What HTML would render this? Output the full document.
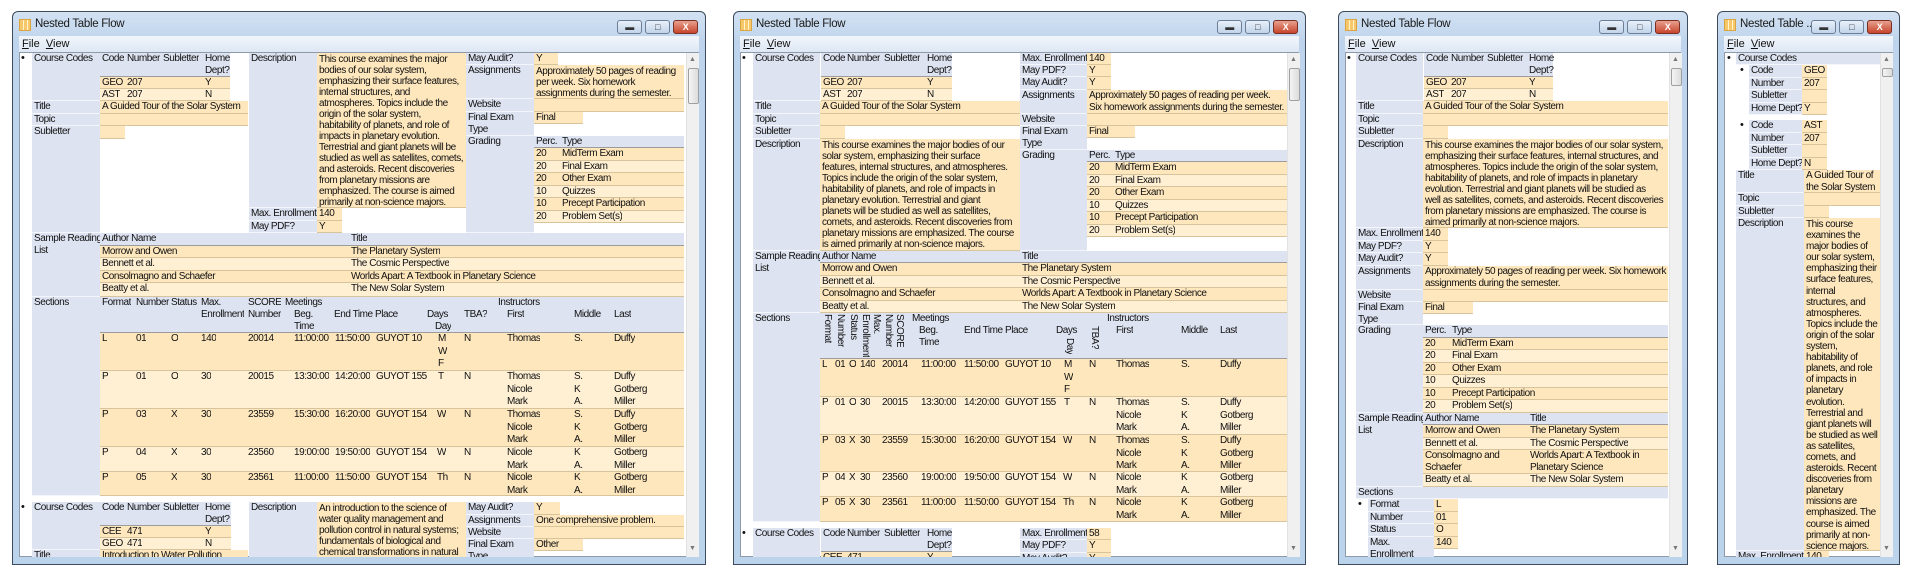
<!DOCTYPE html>
<html><head><meta charset="utf-8">
<style>
*{margin:0;padding:0;box-sizing:border-box}
body{width:1927px;height:572px;background:#fff;position:relative;overflow:hidden;font-family:"Liberation Sans",sans-serif;font-size:10px;letter-spacing:-0.45px;color:#111}
.a{position:absolute;white-space:nowrap;overflow:hidden;line-height:12px;padding-left:2px}
.L{background:#dde3f1;box-shadow:inset 0 -1px #f4f6fb}
.V{background:#fee7bd;box-shadow:inset 0 -1px #d8c49c}
.W{background:#fff0d4;box-shadow:inset 0 -1px #d8c49c}
.H{background:#dde3f1;box-shadow:inset 0 -1px #9c9c9c}
.win{position:absolute;top:11px;height:554px;border:1px solid #3d4b5c;border-radius:6px 6px 0 0;background:linear-gradient(#d3e2f3,#bed4ec 30px,#bcd3ec)}
.ttl{position:absolute;top:6px;left:22px;font-size:11.5px;letter-spacing:-0.3px;color:#1a1a1a}
.ico{position:absolute;top:7px;left:6px;width:12px;height:12px;background:repeating-linear-gradient(90deg,#f6c86a 0 3px,#fff2cc 3px 4px),#f6c86a;border:1px solid #d9a441}
.menu{position:absolute;top:24px;left:6px;right:6px;height:16px;background:linear-gradient(#f2f6fb,#dde7f4);font-size:11px;letter-spacing:0;padding:2px 3px}
.menu u{text-decoration:underline}
.cnt{position:absolute;top:40px;left:6px;right:6px;bottom:7px;background:#fff;border:1px solid #8e9aa8}
.btn{position:absolute;top:8px;width:25px;height:14px;border:1px solid #6d7f96;border-radius:3px;background:linear-gradient(#e8f0fa,#c2d4ea);font-size:9px;text-align:center;line-height:12px;color:#333}
.cls{background:linear-gradient(#e7a08f,#c8452c);color:#fff;font-weight:bold;border-color:#7a2e22}
.clip{position:absolute;left:0;top:0;width:1927px;height:572px}
.sb{position:absolute;top:53px;width:13px;height:504px;background:#f0f0f0;border-left:1px solid #e2e2e2}
.sb .th{position:absolute;left:1px;width:11px;border:1px solid #a0a0a0;border-radius:2px;background:linear-gradient(90deg,#f4f4f4,#dcdcdc)}
.sb .up,.sb .dn{position:absolute;left:2px;font-size:7px;color:#777}
.bl{position:absolute;font-size:11px}
.vt{writing-mode:vertical-rl;white-space:nowrap;line-height:11px}
</style></head><body>

<div class="win" style="left:12px;width:694px"><div class="ico"></div><div class="ttl">Nested Table Flow</div>
<div class="btn" style="left:604px">&#9644;</div><div class="btn" style="left:632px">&#9633;</div><div class="btn cls" style="left:660px">X</div>
<div class="menu"><u>F</u>ile&nbsp; <u>V</u>iew</div><div class="cnt"></div></div>

<div class="win" style="left:733px;width:573px"><div class="ico"></div><div class="ttl">Nested Table Flow</div>
<div class="btn" style="left:483px">&#9644;</div><div class="btn" style="left:511px">&#9633;</div><div class="btn cls" style="left:539px">X</div>
<div class="menu"><u>F</u>ile&nbsp; <u>V</u>iew</div><div class="cnt"></div></div>

<div class="win" style="left:1338px;width:350px"><div class="ico"></div><div class="ttl">Nested Table Flow</div>
<div class="btn" style="left:260px">&#9644;</div><div class="btn" style="left:288px">&#9633;</div><div class="btn cls" style="left:316px">X</div>
<div class="menu"><u>F</u>ile&nbsp; <u>V</u>iew</div><div class="cnt"></div></div>

<div class="win" style="left:1717px;width:183px"><div class="ico"></div><div class="ttl">Nested Table ...</div>
<div class="btn" style="left:93px">&#9644;</div><div class="btn" style="left:121px">&#9633;</div><div class="btn cls" style="left:149px">X</div>
<div class="menu"><u>F</u>ile&nbsp; <u>V</u>iew</div><div class="cnt"></div></div>

<div class="clip" style="clip-path:inset(52px 1241px 15px 19px)">
<div class="bl" style="left:21px;top:52px">•</div>
<div class="a L" style="left:32px;top:53px;width:68px;height:48px">Course Codes</div>
<div class="a L" style="left:32px;top:101px;width:68px;height:13px">Title</div>
<div class="a L" style="left:32px;top:114px;width:68px;height:12px">Topic</div>
<div class="a L" style="left:32px;top:126px;width:68px;height:107px">Subletter</div>
<div class="a H" style="left:100px;top:53px;width:130px;height:24px"></div>
<div class="a" style="left:100px;top:53px">Code</div><div class="a" style="left:125px;top:53px">Number</div><div class="a" style="left:161px;top:53px">Subletter</div><div class="a" style="left:203px;top:53px">Home<br>Dept?</div>
<div class="a V" style="left:100px;top:77px;width:130px;height:12px"></div>
<div class="a" style="left:100px;top:77px">GEO</div><div class="a" style="left:125px;top:77px">207</div><div class="a" style="left:203px;top:77px">Y</div>
<div class="a W" style="left:100px;top:89px;width:130px;height:12px"></div>
<div class="a" style="left:100px;top:89px">AST</div><div class="a" style="left:125px;top:89px">207</div><div class="a" style="left:203px;top:89px">N</div>
<div class="a V" style="left:100px;top:101px;width:148px;height:13px">A Guided Tour of the Solar System</div>
<div class="a V" style="left:100px;top:114px;width:148px;height:12px"></div>
<div class="a V" style="left:100px;top:126px;width:25px;height:13px"></div>
<div class="a L" style="left:249px;top:53px;width:68px;height:155px">Description</div>
<div class="a V" style="left:317px;top:53px;width:149px;height:155px;line-height:11px;padding-top:1px">This course examines the major<br>bodies of our solar system,<br>emphasizing their surface features,<br>internal structures, and<br>atmospheres. Topics include the<br>origin of the solar system,<br>habitability of planets, and role of<br>impacts in planetary evolution.<br>Terrestrial and giant planets will be<br>studied as well as satellites, comets,<br>and asteroids. Recent discoveries<br>from planetary missions are<br>emphasized. The course is aimed<br>primarily at non-science majors.</div>
<div class="a L" style="left:249px;top:208px;width:68px;height:13px">Max. Enrollment</div><div class="a V" style="left:317px;top:208px;width:25px;height:13px">140</div>
<div class="a L" style="left:249px;top:221px;width:68px;height:12px">May PDF?</div><div class="a V" style="left:317px;top:221px;width:25px;height:12px">Y</div>
<div class="a L" style="left:466px;top:53px;width:68px;height:12px">May Audit?</div><div class="a V" style="left:534px;top:53px;width:24px;height:12px">Y</div>
<div class="a L" style="left:466px;top:65px;width:68px;height:34px">Assignments</div><div class="a V" style="left:534px;top:65px;width:150px;height:34px;line-height:11px;padding-top:1px">Approximately 50 pages of reading<br>per week. Six homework<br>assignments during the semester.</div>
<div class="a L" style="left:466px;top:99px;width:68px;height:13px">Website</div><div class="a V" style="left:534px;top:99px;width:150px;height:13px"></div>
<div class="a L" style="left:466px;top:112px;width:68px;height:24px">Final Exam<br>Type</div><div class="a V" style="left:534px;top:112px;width:49px;height:12px">Final</div>
<div class="a L" style="left:466px;top:136px;width:68px;height:97px">Grading</div>
<div class="a H" style="left:534px;top:136px;width:150px;height:12px">Perc.</div><div class="a" style="left:560px;top:136px">Type</div>
<div class="a V" style="left:534px;top:148px;width:150px;height:13px">20</div><div class="a" style="left:560px;top:148px">MidTerm Exam</div>
<div class="a W" style="left:534px;top:161px;width:150px;height:12px">20</div><div class="a" style="left:560px;top:161px">Final Exam</div>
<div class="a V" style="left:534px;top:173px;width:150px;height:13px">20</div><div class="a" style="left:560px;top:173px">Other Exam</div>
<div class="a W" style="left:534px;top:186px;width:150px;height:12px">10</div><div class="a" style="left:560px;top:186px">Quizzes</div>
<div class="a V" style="left:534px;top:198px;width:150px;height:13px">10</div><div class="a" style="left:560px;top:198px">Precept Participation</div>
<div class="a W" style="left:534px;top:211px;width:150px;height:12px">20</div><div class="a" style="left:560px;top:211px">Problem Set(s)</div>
<div class="a L" style="left:32px;top:233px;width:68px;height:64px">Sample Reading<br>List</div>
<div class="a H" style="left:100px;top:233px;width:584px;height:13px">Author Name</div><div class="a" style="left:349px;top:233px">Title</div>
<div class="a V" style="left:100px;top:246px;width:584px;height:12px">Morrow and Owen</div><div class="a" style="left:349px;top:246px">The Planetary System</div>
<div class="a W" style="left:100px;top:258px;width:584px;height:13px">Bennett et al.</div><div class="a" style="left:349px;top:258px">The Cosmic Perspective</div>
<div class="a V" style="left:100px;top:271px;width:584px;height:12px">Consolmagno and Schaefer</div><div class="a" style="left:349px;top:271px">Worlds Apart: A Textbook in Planetary Science</div>
<div class="a W" style="left:100px;top:283px;width:584px;height:14px">Beatty et al.</div><div class="a" style="left:349px;top:283px">The New Solar System</div>
<div class="a L" style="left:32px;top:297px;width:68px;height:199px">Sections</div>
<div class="a H" style="left:100px;top:297px;width:584px;height:36px"></div>
<div class="a" style="left:100px;top:297px">Format</div><div class="a" style="left:134px;top:297px">Number</div><div class="a" style="left:169px;top:297px">Status</div><div class="a" style="left:199px;top:297px">Max.<br>Enrollment</div><div class="a" style="left:246px;top:297px">SCORE<br>Number</div><div class="a" style="left:283px;top:297px">Meetings</div>
<div class="a" style="left:292px;top:309px">Beg.<br>Time</div><div class="a" style="left:332px;top:309px">End Time</div><div class="a" style="left:373px;top:309px">Place</div><div class="a" style="left:425px;top:309px">Days</div><div class="a" style="left:433px;top:321px">Day</div><div class="a" style="left:462px;top:309px">TBA?</div>
<div class="a" style="left:496px;top:297px">Instructors</div><div class="a" style="left:505px;top:309px">First</div><div class="a" style="left:572px;top:309px">Middle</div><div class="a" style="left:612px;top:309px">Last</div>
<div class="a V" style="left:100px;top:333px;width:584px;height:38px"></div>
<div class="a W" style="left:100px;top:371px;width:584px;height:38px"></div>
<div class="a V" style="left:100px;top:409px;width:584px;height:38px"></div>
<div class="a W" style="left:100px;top:447px;width:584px;height:25px"></div>
<div class="a V" style="left:100px;top:472px;width:584px;height:24px"></div>
<div class="a" style="left:100px;top:333px">L</div><div class="a" style="left:134px;top:333px">01</div><div class="a" style="left:169px;top:333px">O</div><div class="a" style="left:199px;top:333px">140</div><div class="a" style="left:246px;top:333px">20014</div><div class="a" style="left:292px;top:333px">11:00:00</div><div class="a" style="left:333px;top:333px">11:50:00</div><div class="a" style="left:374px;top:333px">GUYOT 10</div><div class="a" style="left:436px;top:333px;line-height:12.5px">M<br>W<br>F</div><div class="a" style="left:462px;top:333px">N</div><div class="a" style="left:505px;top:333px">Thomas</div><div class="a" style="left:572px;top:333px">S.</div><div class="a" style="left:612px;top:333px">Duffy</div>
<div class="a" style="left:100px;top:371px">P</div><div class="a" style="left:134px;top:371px">01</div><div class="a" style="left:169px;top:371px">O</div><div class="a" style="left:199px;top:371px">30</div><div class="a" style="left:246px;top:371px">20015</div><div class="a" style="left:292px;top:371px">13:30:00</div><div class="a" style="left:333px;top:371px">14:20:00</div><div class="a" style="left:374px;top:371px">GUYOT 155</div><div class="a" style="left:436px;top:371px">T</div><div class="a" style="left:462px;top:371px">N</div><div class="a" style="left:505px;top:371px;line-height:12.5px">Thomas<br>Nicole<br>Mark</div><div class="a" style="left:572px;top:371px;line-height:12.5px">S.<br>K<br>A.</div><div class="a" style="left:612px;top:371px;line-height:12.5px">Duffy<br>Gotberg<br>Miller</div>
<div class="a" style="left:100px;top:409px">P</div><div class="a" style="left:134px;top:409px">03</div><div class="a" style="left:169px;top:409px">X</div><div class="a" style="left:199px;top:409px">30</div><div class="a" style="left:246px;top:409px">23559</div><div class="a" style="left:292px;top:409px">15:30:00</div><div class="a" style="left:333px;top:409px">16:20:00</div><div class="a" style="left:374px;top:409px">GUYOT 154</div><div class="a" style="left:435px;top:409px">W</div><div class="a" style="left:462px;top:409px">N</div><div class="a" style="left:505px;top:409px;line-height:12.5px">Thomas<br>Nicole<br>Mark</div><div class="a" style="left:572px;top:409px;line-height:12.5px">S.<br>K<br>A.</div><div class="a" style="left:612px;top:409px;line-height:12.5px">Duffy<br>Gotberg<br>Miller</div>
<div class="a" style="left:100px;top:447px">P</div><div class="a" style="left:134px;top:447px">04</div><div class="a" style="left:169px;top:447px">X</div><div class="a" style="left:199px;top:447px">30</div><div class="a" style="left:246px;top:447px">23560</div><div class="a" style="left:292px;top:447px">19:00:00</div><div class="a" style="left:333px;top:447px">19:50:00</div><div class="a" style="left:374px;top:447px">GUYOT 154</div><div class="a" style="left:435px;top:447px">W</div><div class="a" style="left:462px;top:447px">N</div><div class="a" style="left:505px;top:447px;line-height:12.5px">Nicole<br>Mark</div><div class="a" style="left:572px;top:447px;line-height:12.5px">K<br>A.</div><div class="a" style="left:612px;top:447px;line-height:12.5px">Gotberg<br>Miller</div>
<div class="a" style="left:100px;top:472px">P</div><div class="a" style="left:134px;top:472px">05</div><div class="a" style="left:169px;top:472px">X</div><div class="a" style="left:199px;top:472px">30</div><div class="a" style="left:246px;top:472px">23561</div><div class="a" style="left:292px;top:472px">11:00:00</div><div class="a" style="left:333px;top:472px">11:50:00</div><div class="a" style="left:374px;top:472px">GUYOT 154</div><div class="a" style="left:435px;top:472px">Th</div><div class="a" style="left:462px;top:472px">N</div><div class="a" style="left:505px;top:472px;line-height:12.5px">Nicole<br>Mark</div><div class="a" style="left:572px;top:472px;line-height:12.5px">K<br>A.</div><div class="a" style="left:612px;top:472px;line-height:12.5px">Gotberg<br>Miller</div>
<div class="bl" style="left:21px;top:501px">•</div>
<div class="a L" style="left:32px;top:502px;width:68px;height:48px">Course Codes</div>
<div class="a H" style="left:100px;top:502px;width:131px;height:24px"></div>
<div class="a" style="left:100px;top:502px">Code</div><div class="a" style="left:125px;top:502px">Number</div><div class="a" style="left:161px;top:502px">Subletter</div><div class="a" style="left:203px;top:502px">Home<br>Dept?</div>
<div class="a V" style="left:100px;top:526px;width:131px;height:12px"></div><div class="a" style="left:100px;top:526px">CEE</div><div class="a" style="left:125px;top:526px">471</div><div class="a" style="left:203px;top:526px">Y</div>
<div class="a W" style="left:100px;top:538px;width:131px;height:12px"></div><div class="a" style="left:100px;top:538px">GEO</div><div class="a" style="left:125px;top:538px">471</div><div class="a" style="left:203px;top:538px">N</div>
<div class="a L" style="left:32px;top:550px;width:68px;height:12px">Title</div><div class="a V" style="left:100px;top:550px;width:148px;height:12px">Introduction to Water Pollution</div>
<div class="a L" style="left:249px;top:502px;width:68px;height:60px">Description</div>
<div class="a V" style="left:317px;top:502px;width:149px;height:60px;line-height:11px;padding-top:1px">An introduction to the science of<br>water quality management and<br>pollution control in natural systems;<br>fundamentals of biological and<br>chemical transformations in natural</div>
<div class="a L" style="left:466px;top:502px;width:68px;height:13px">May Audit?</div><div class="a V" style="left:534px;top:502px;width:26px;height:13px">Y</div>
<div class="a L" style="left:466px;top:515px;width:68px;height:12px">Assignments</div><div class="a V" style="left:534px;top:515px;width:150px;height:12px">One comprehensive problem.</div>
<div class="a L" style="left:466px;top:527px;width:68px;height:12px">Website</div><div class="a V" style="left:534px;top:527px;width:150px;height:12px"></div>
<div class="a L" style="left:466px;top:539px;width:68px;height:24px">Final Exam<br>Type</div><div class="a V" style="left:534px;top:539px;width:49px;height:12px">Other</div>
</div>
<div class="sb" style="left:686px"><div class="up" style="top:3px">▲</div><div class="th" style="top:15px;height:36px"></div><div class="dn" style="top:492px">▼</div></div>

<div class="clip" style="clip-path:inset(52px 628px 15px 740px)">
<div class="bl" style="left:742px;top:52px">•</div>
<div class="a L" style="left:753px;top:53px;width:67px;height:48px">Course Codes</div>
<div class="a L" style="left:753px;top:101px;width:67px;height:13px">Title</div>
<div class="a L" style="left:753px;top:114px;width:67px;height:12px">Topic</div>
<div class="a L" style="left:753px;top:126px;width:67px;height:13px">Subletter</div>
<div class="a L" style="left:753px;top:139px;width:67px;height:112px">Description</div>
<div class="a H" style="left:821px;top:53px;width:131px;height:24px"></div>
<div class="a" style="left:821px;top:53px">Code</div><div class="a" style="left:845px;top:53px">Number</div><div class="a" style="left:882px;top:53px">Subletter</div><div class="a" style="left:925px;top:53px">Home<br>Dept?</div>
<div class="a V" style="left:821px;top:77px;width:131px;height:12px"></div><div class="a" style="left:821px;top:77px">GEO</div><div class="a" style="left:845px;top:77px">207</div><div class="a" style="left:925px;top:77px">Y</div>
<div class="a W" style="left:821px;top:89px;width:131px;height:12px"></div><div class="a" style="left:821px;top:89px">AST</div><div class="a" style="left:845px;top:89px">207</div><div class="a" style="left:925px;top:89px">N</div>
<div class="a V" style="left:820px;top:101px;width:200px;height:13px">A Guided Tour of the Solar System</div>
<div class="a V" style="left:820px;top:114px;width:200px;height:12px"></div>
<div class="a V" style="left:820px;top:126px;width:25px;height:13px"></div>
<div class="a V" style="left:820px;top:139px;width:200px;height:112px;line-height:11px;padding-top:1px">This course examines the major bodies of our<br>solar system, emphasizing their surface<br>features, internal structures, and atmospheres.<br>Topics include the origin of the solar system,<br>habitability of planets, and role of impacts in<br>planetary evolution. Terrestrial and giant<br>planets will be studied as well as satellites,<br>comets, and asteroids. Recent discoveries from<br>planetary missions are emphasized. The course<br>is aimed primarily at non-science majors.</div>
<div class="a L" style="left:1020px;top:53px;width:67px;height:12px">Max. Enrollment</div><div class="a V" style="left:1087px;top:53px;width:24px;height:12px">140</div>
<div class="a L" style="left:1020px;top:65px;width:67px;height:12px">May PDF?</div><div class="a V" style="left:1087px;top:65px;width:24px;height:12px">Y</div>
<div class="a L" style="left:1020px;top:77px;width:67px;height:13px">May Audit?</div><div class="a V" style="left:1087px;top:77px;width:24px;height:13px">Y</div>
<div class="a L" style="left:1020px;top:90px;width:67px;height:24px">Assignments</div><div class="a V" style="left:1087px;top:90px;width:200px;height:24px">Approximately 50 pages of reading per week.<br>Six homework assignments during the semester.</div>
<div class="a L" style="left:1020px;top:114px;width:67px;height:12px">Website</div><div class="a V" style="left:1087px;top:114px;width:200px;height:12px"></div>
<div class="a L" style="left:1020px;top:126px;width:67px;height:24px">Final Exam<br>Type</div><div class="a V" style="left:1087px;top:126px;width:48px;height:12px">Final</div>
<div class="a L" style="left:1020px;top:150px;width:67px;height:101px">Grading</div>
<div class="a H" style="left:1087px;top:150px;width:200px;height:12px">Perc.</div><div class="a" style="left:1113px;top:150px">Type</div>
<div class="a V" style="left:1087px;top:162px;width:200px;height:13px">20</div><div class="a" style="left:1113px;top:162px">MidTerm Exam</div>
<div class="a W" style="left:1087px;top:175px;width:200px;height:12px">20</div><div class="a" style="left:1113px;top:175px">Final Exam</div>
<div class="a V" style="left:1087px;top:187px;width:200px;height:13px">20</div><div class="a" style="left:1113px;top:187px">Other Exam</div>
<div class="a W" style="left:1087px;top:200px;width:200px;height:12px">10</div><div class="a" style="left:1113px;top:200px">Quizzes</div>
<div class="a V" style="left:1087px;top:212px;width:200px;height:13px">10</div><div class="a" style="left:1113px;top:212px">Precept Participation</div>
<div class="a W" style="left:1087px;top:225px;width:200px;height:12px">20</div><div class="a" style="left:1113px;top:225px">Problem Set(s)</div>
<div class="a L" style="left:753px;top:251px;width:67px;height:62px">Sample Reading<br>List</div>
<div class="a H" style="left:820px;top:251px;width:467px;height:12px">Author Name</div><div class="a" style="left:1020px;top:251px">Title</div>
<div class="a V" style="left:820px;top:263px;width:467px;height:13px">Morrow and Owen</div><div class="a" style="left:1020px;top:263px">The Planetary System</div>
<div class="a W" style="left:820px;top:276px;width:467px;height:12px">Bennett et al.</div><div class="a" style="left:1020px;top:276px">The Cosmic Perspective</div>
<div class="a V" style="left:820px;top:288px;width:467px;height:13px">Consolmagno and Schaefer</div><div class="a" style="left:1020px;top:288px">Worlds Apart: A Textbook in Planetary Science</div>
<div class="a W" style="left:820px;top:301px;width:467px;height:12px">Beatty et al.</div><div class="a" style="left:1020px;top:301px">The New Solar System</div>
<div class="a L" style="left:753px;top:313px;width:67px;height:209px">Sections</div>
<div class="a H" style="left:820px;top:313px;width:467px;height:46px"></div>
<div class="a vt" style="left:820px;top:314px">Format</div><div class="a vt" style="left:833px;top:314px">Number</div><div class="a vt" style="left:846px;top:314px">Status</div><div class="a vt" style="left:858px;top:314px">Max.<br>Enrollment</div><div class="a vt" style="left:881px;top:314px">SCORE<br>Number</div>
<div class="a" style="left:910px;top:313px">Meetings</div><div class="a" style="left:917px;top:325px">Beg.<br>Time</div><div class="a" style="left:962px;top:325px">End Time</div><div class="a" style="left:1003px;top:325px">Place</div><div class="a" style="left:1054px;top:325px">Days</div><div class="a vt" style="left:1062px;top:338px">Day</div><div class="a vt" style="left:1087px;top:326px">TBA?</div>
<div class="a" style="left:1105px;top:313px">Instructors</div><div class="a" style="left:1114px;top:325px">First</div><div class="a" style="left:1179px;top:325px">Middle</div><div class="a" style="left:1218px;top:325px">Last</div>
<div class="a V" style="left:820px;top:359px;width:467px;height:38px"></div>
<div class="a W" style="left:820px;top:397px;width:467px;height:38px"></div>
<div class="a V" style="left:820px;top:435px;width:467px;height:37px"></div>
<div class="a W" style="left:820px;top:472px;width:467px;height:25px"></div>
<div class="a V" style="left:820px;top:497px;width:467px;height:25px"></div>
<div class="a" style="left:820px;top:359px">L</div><div class="a" style="left:833px;top:359px">01</div><div class="a" style="left:847px;top:359px">O</div><div class="a" style="left:858px;top:359px">140</div><div class="a" style="left:880px;top:359px">20014</div><div class="a" style="left:919px;top:359px">11:00:00</div><div class="a" style="left:962px;top:359px">11:50:00</div><div class="a" style="left:1003px;top:359px">GUYOT 10</div><div class="a" style="left:1062px;top:359px;line-height:12.5px">M<br>W<br>F</div><div class="a" style="left:1087px;top:359px">N</div><div class="a" style="left:1114px;top:359px">Thomas</div><div class="a" style="left:1179px;top:359px">S.</div><div class="a" style="left:1218px;top:359px">Duffy</div>
<div class="a" style="left:820px;top:397px">P</div><div class="a" style="left:833px;top:397px">01</div><div class="a" style="left:847px;top:397px">O</div><div class="a" style="left:858px;top:397px">30</div><div class="a" style="left:880px;top:397px">20015</div><div class="a" style="left:919px;top:397px">13:30:00</div><div class="a" style="left:962px;top:397px">14:20:00</div><div class="a" style="left:1003px;top:397px">GUYOT 155</div><div class="a" style="left:1062px;top:397px">T</div><div class="a" style="left:1087px;top:397px">N</div><div class="a" style="left:1114px;top:397px;line-height:12.5px">Thomas<br>Nicole<br>Mark</div><div class="a" style="left:1179px;top:397px;line-height:12.5px">S.<br>K<br>A.</div><div class="a" style="left:1218px;top:397px;line-height:12.5px">Duffy<br>Gotberg<br>Miller</div>
<div class="a" style="left:820px;top:435px">P</div><div class="a" style="left:833px;top:435px">03</div><div class="a" style="left:847px;top:435px">X</div><div class="a" style="left:858px;top:435px">30</div><div class="a" style="left:880px;top:435px">23559</div><div class="a" style="left:919px;top:435px">15:30:00</div><div class="a" style="left:962px;top:435px">16:20:00</div><div class="a" style="left:1003px;top:435px">GUYOT 154</div><div class="a" style="left:1061px;top:435px">W</div><div class="a" style="left:1087px;top:435px">N</div><div class="a" style="left:1114px;top:435px;line-height:12.5px">Thomas<br>Nicole<br>Mark</div><div class="a" style="left:1179px;top:435px;line-height:12.5px">S.<br>K<br>A.</div><div class="a" style="left:1218px;top:435px;line-height:12.5px">Duffy<br>Gotberg<br>Miller</div>
<div class="a" style="left:820px;top:472px">P</div><div class="a" style="left:833px;top:472px">04</div><div class="a" style="left:847px;top:472px">X</div><div class="a" style="left:858px;top:472px">30</div><div class="a" style="left:880px;top:472px">23560</div><div class="a" style="left:919px;top:472px">19:00:00</div><div class="a" style="left:962px;top:472px">19:50:00</div><div class="a" style="left:1003px;top:472px">GUYOT 154</div><div class="a" style="left:1061px;top:472px">W</div><div class="a" style="left:1087px;top:472px">N</div><div class="a" style="left:1114px;top:472px;line-height:12.5px">Nicole<br>Mark</div><div class="a" style="left:1179px;top:472px;line-height:12.5px">K<br>A.</div><div class="a" style="left:1218px;top:472px;line-height:12.5px">Gotberg<br>Miller</div>
<div class="a" style="left:820px;top:497px">P</div><div class="a" style="left:833px;top:497px">05</div><div class="a" style="left:847px;top:497px">X</div><div class="a" style="left:858px;top:497px">30</div><div class="a" style="left:880px;top:497px">23561</div><div class="a" style="left:919px;top:497px">11:00:00</div><div class="a" style="left:962px;top:497px">11:50:00</div><div class="a" style="left:1003px;top:497px">GUYOT 154</div><div class="a" style="left:1061px;top:497px">Th</div><div class="a" style="left:1087px;top:497px">N</div><div class="a" style="left:1114px;top:497px;line-height:12.5px">Nicole<br>Mark</div><div class="a" style="left:1179px;top:497px;line-height:12.5px">K<br>A.</div><div class="a" style="left:1218px;top:497px;line-height:12.5px">Gotberg<br>Miller</div>
<div class="bl" style="left:742px;top:527px">•</div>
<div class="a L" style="left:753px;top:528px;width:67px;height:34px">Course Codes</div>
<div class="a H" style="left:821px;top:528px;width:131px;height:24px"></div>
<div class="a" style="left:821px;top:528px">Code</div><div class="a" style="left:845px;top:528px">Number</div><div class="a" style="left:882px;top:528px">Subletter</div><div class="a" style="left:925px;top:528px">Home<br>Dept?</div>
<div class="a V" style="left:821px;top:552px;width:131px;height:12px"></div><div class="a" style="left:821px;top:552px">CEE</div><div class="a" style="left:845px;top:552px">471</div><div class="a" style="left:925px;top:552px">Y</div>
<div class="a L" style="left:1020px;top:528px;width:67px;height:12px">Max. Enrollment</div><div class="a V" style="left:1087px;top:528px;width:24px;height:12px">58</div>
<div class="a L" style="left:1020px;top:540px;width:67px;height:13px">May PDF?</div><div class="a V" style="left:1087px;top:540px;width:24px;height:13px">Y</div>
<div class="a L" style="left:1020px;top:553px;width:67px;height:12px">May Audit?</div><div class="a V" style="left:1087px;top:553px;width:24px;height:12px">Y</div>
</div>
<div class="sb" style="left:1287px"><div class="up" style="top:3px">▲</div><div class="th" style="top:15px;height:33px"></div><div class="dn" style="top:492px">▼</div></div>

<div class="clip" style="clip-path:inset(52px 246px 15px 1345px)">
<div class="bl" style="left:1347px;top:52px">•</div>
<div class="a L" style="left:1356px;top:53px;width:67px;height:48px">Course Codes</div>
<div class="a H" style="left:1424px;top:53px;width:129px;height:24px"></div>
<div class="a" style="left:1424px;top:53px">Code</div><div class="a" style="left:1449px;top:53px">Number</div><div class="a" style="left:1485px;top:53px">Subletter</div><div class="a" style="left:1527px;top:53px">Home<br>Dept?</div>
<div class="a V" style="left:1424px;top:77px;width:129px;height:12px"></div><div class="a" style="left:1424px;top:77px">GEO</div><div class="a" style="left:1449px;top:77px">207</div><div class="a" style="left:1527px;top:77px">Y</div>
<div class="a W" style="left:1424px;top:89px;width:129px;height:12px"></div><div class="a" style="left:1424px;top:89px">AST</div><div class="a" style="left:1449px;top:89px">207</div><div class="a" style="left:1527px;top:89px">N</div>
<div class="a L" style="left:1356px;top:101px;width:67px;height:13px">Title</div><div class="a V" style="left:1423px;top:101px;width:245px;height:13px">A Guided Tour of the Solar System</div>
<div class="a L" style="left:1356px;top:114px;width:67px;height:12px">Topic</div><div class="a V" style="left:1423px;top:114px;width:245px;height:12px"></div>
<div class="a L" style="left:1356px;top:126px;width:67px;height:13px">Subletter</div><div class="a V" style="left:1423px;top:126px;width:25px;height:13px"></div>
<div class="a L" style="left:1356px;top:139px;width:67px;height:89px">Description</div>
<div class="a V" style="left:1423px;top:139px;width:245px;height:89px;line-height:11px;padding-top:1px">This course examines the major bodies of our solar system,<br>emphasizing their surface features, internal structures, and<br>atmospheres. Topics include the origin of the solar system,<br>habitability of planets, and role of impacts in planetary<br>evolution. Terrestrial and giant planets will be studied as<br>well as satellites, comets, and asteroids. Recent discoveries<br>from planetary missions are emphasized. The course is<br>aimed primarily at non-science majors.</div>
<div class="a L" style="left:1356px;top:228px;width:67px;height:13px">Max. Enrollment</div><div class="a V" style="left:1423px;top:228px;width:25px;height:13px">140</div>
<div class="a L" style="left:1356px;top:241px;width:67px;height:12px">May PDF?</div><div class="a V" style="left:1423px;top:241px;width:25px;height:12px">Y</div>
<div class="a L" style="left:1356px;top:253px;width:67px;height:13px">May Audit?</div><div class="a V" style="left:1423px;top:253px;width:25px;height:13px">Y</div>
<div class="a L" style="left:1356px;top:266px;width:67px;height:24px">Assignments</div><div class="a V" style="left:1423px;top:266px;width:245px;height:24px">Approximately 50 pages of reading per week. Six homework<br>assignments during the semester.</div>
<div class="a L" style="left:1356px;top:290px;width:67px;height:12px">Website</div><div class="a V" style="left:1423px;top:290px;width:245px;height:12px"></div>
<div class="a L" style="left:1356px;top:302px;width:67px;height:23px">Final Exam<br>Type</div><div class="a V" style="left:1423px;top:302px;width:50px;height:12px">Final</div>
<div class="a L" style="left:1356px;top:325px;width:67px;height:88px">Grading</div>
<div class="a H" style="left:1423px;top:325px;width:245px;height:13px">Perc.</div><div class="a" style="left:1450px;top:325px">Type</div>
<div class="a V" style="left:1423px;top:338px;width:245px;height:12px">20</div><div class="a" style="left:1450px;top:338px">MidTerm Exam</div>
<div class="a W" style="left:1423px;top:350px;width:245px;height:13px">20</div><div class="a" style="left:1450px;top:350px">Final Exam</div>
<div class="a V" style="left:1423px;top:363px;width:245px;height:12px">20</div><div class="a" style="left:1450px;top:363px">Other Exam</div>
<div class="a W" style="left:1423px;top:375px;width:245px;height:13px">10</div><div class="a" style="left:1450px;top:375px">Quizzes</div>
<div class="a V" style="left:1423px;top:388px;width:245px;height:12px">10</div><div class="a" style="left:1450px;top:388px">Precept Participation</div>
<div class="a W" style="left:1423px;top:400px;width:245px;height:13px">20</div><div class="a" style="left:1450px;top:400px">Problem Set(s)</div>
<div class="a L" style="left:1356px;top:413px;width:67px;height:74px">Sample Reading<br>List</div>
<div class="a H" style="left:1423px;top:413px;width:245px;height:12px">Author Name</div><div class="a" style="left:1528px;top:413px">Title</div>
<div class="a V" style="left:1423px;top:425px;width:245px;height:13px">Morrow and Owen</div><div class="a" style="left:1528px;top:425px">The Planetary System</div>
<div class="a W" style="left:1423px;top:438px;width:245px;height:12px">Bennett et al.</div><div class="a" style="left:1528px;top:438px">The Cosmic Perspective</div>
<div class="a V" style="left:1423px;top:450px;width:245px;height:24px">Consolmagno and<br>Schaefer</div><div class="a" style="left:1528px;top:450px">Worlds Apart: A Textbook in<br>Planetary Science</div>
<div class="a W" style="left:1423px;top:474px;width:245px;height:13px">Beatty et al.</div><div class="a" style="left:1528px;top:474px">The New Solar System</div>
<div class="a L" style="left:1356px;top:487px;width:312px;height:12px">Sections</div>
<div class="bl" style="left:1358px;top:498px">•</div>
<div class="a L" style="left:1368px;top:499px;width:66px;height:13px">Format</div><div class="a V" style="left:1434px;top:499px;width:24px;height:13px">L</div>
<div class="a L" style="left:1368px;top:512px;width:66px;height:12px">Number</div><div class="a V" style="left:1434px;top:512px;width:24px;height:12px">01</div>
<div class="a L" style="left:1368px;top:524px;width:66px;height:13px">Status</div><div class="a V" style="left:1434px;top:524px;width:24px;height:13px">O</div>
<div class="a L" style="left:1368px;top:537px;width:66px;height:24px">Max.<br>Enrollment</div><div class="a V" style="left:1434px;top:537px;width:24px;height:12px">140</div>
</div>
<div class="sb" style="left:1669px"><div class="up" style="top:3px">▲</div><div class="th" style="top:15px;height:18px"></div><div class="dn" style="top:492px">▼</div></div>

<div class="clip" style="clip-path:inset(52px 34px 15px 1724px)">
<div class="bl" style="left:1727px;top:52px">•</div>
<div class="a L" style="left:1736px;top:53px;width:144px;height:12px">Course Codes</div>
<div class="bl" style="left:1740px;top:64px">•</div>
<div class="a L" style="left:1749px;top:65px;width:53px;height:13px">Code</div><div class="a V" style="left:1802px;top:65px;width:25px;height:13px">GEO</div>
<div class="a L" style="left:1749px;top:78px;width:53px;height:12px">Number</div><div class="a V" style="left:1802px;top:78px;width:25px;height:12px">207</div>
<div class="a L" style="left:1749px;top:90px;width:53px;height:13px">Subletter</div><div class="a V" style="left:1802px;top:90px;width:25px;height:13px"></div>
<div class="a L" style="left:1749px;top:103px;width:53px;height:12px">Home Dept?</div><div class="a V" style="left:1802px;top:103px;width:25px;height:12px">Y</div>
<div class="bl" style="left:1740px;top:119px">•</div>
<div class="a L" style="left:1749px;top:120px;width:53px;height:13px">Code</div><div class="a V" style="left:1802px;top:120px;width:25px;height:13px">AST</div>
<div class="a L" style="left:1749px;top:133px;width:53px;height:12px">Number</div><div class="a V" style="left:1802px;top:133px;width:25px;height:12px">207</div>
<div class="a L" style="left:1749px;top:145px;width:53px;height:13px">Subletter</div><div class="a V" style="left:1802px;top:145px;width:25px;height:13px"></div>
<div class="a L" style="left:1749px;top:158px;width:53px;height:12px">Home Dept?</div><div class="a V" style="left:1802px;top:158px;width:25px;height:12px">N</div>
<div class="a L" style="left:1736px;top:170px;width:68px;height:23px">Title</div><div class="a V" style="left:1804px;top:170px;width:76px;height:23px">A Guided Tour of<br>the Solar System</div>
<div class="a L" style="left:1736px;top:193px;width:68px;height:13px">Topic</div><div class="a V" style="left:1804px;top:193px;width:76px;height:13px"></div>
<div class="a L" style="left:1736px;top:206px;width:68px;height:12px">Subletter</div><div class="a V" style="left:1804px;top:206px;width:25px;height:12px"></div>
<div class="a L" style="left:1736px;top:218px;width:68px;height:333px">Description</div>
<div class="a V" style="left:1804px;top:218px;width:76px;height:333px;line-height:11.1px;padding-top:1px">This course<br>examines the<br>major bodies of<br>our solar system,<br>emphasizing their<br>surface features,<br>internal<br>structures, and<br>atmospheres.<br>Topics include the<br>origin of the solar<br>system,<br>habitability of<br>planets, and role<br>of impacts in<br>planetary<br>evolution.<br>Terrestrial and<br>giant planets will<br>be studied as well<br>as satellites,<br>comets, and<br>asteroids. Recent<br>discoveries from<br>planetary<br>missions are<br>emphasized. The<br>course is aimed<br>primarily at non-<br>science majors.</div>
<div class="a L" style="left:1736px;top:551px;width:68px;height:12px">Max. Enrollment</div><div class="a V" style="left:1804px;top:551px;width:25px;height:12px">140</div>
</div>
<div class="sb" style="left:1880px"><div class="up" style="top:3px">▲</div><div class="th" style="top:15px;height:9px"></div><div class="dn" style="top:492px">▼</div></div>

</body></html>
